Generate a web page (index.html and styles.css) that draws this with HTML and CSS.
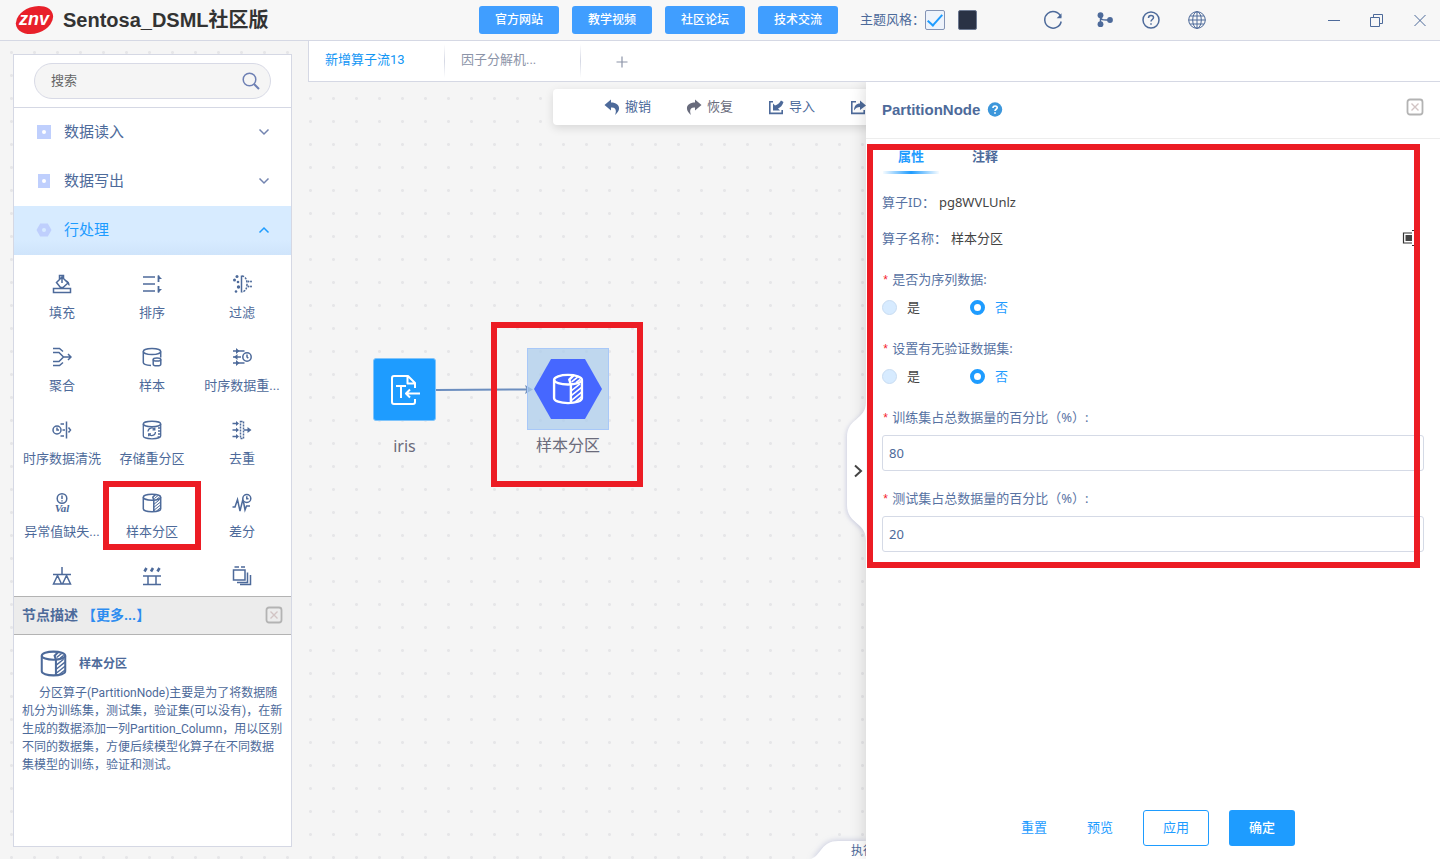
FILE: index.html
```html
<!DOCTYPE html>
<html lang="zh-CN">
<head>
<meta charset="utf-8">
<title>Sentosa_DSML社区版</title>
<link rel="stylesheet" href="styles.css">
</head>
<body>
<svg class="sprite" aria-hidden="true">
  <symbol id="i-partition" viewBox="0 0 20 20">
    <ellipse cx="10" cy="4.2" rx="8.7" ry="3"/>
    <path d="M1.3 4.2v11.6c0 1.7 3.9 3 8.7 3s8.7-1.300 8.700-3V4.200M11.800 7.200v11.500M11.800 7.200L10.800 4.200L13.500 1.500"/>
    <path d="M12 11.200l5.500-4.400M12 14.200l6.500-5.200M12 17.200l6.500-5.200M14.500 18l4-3.200M12.300 5.600l3.700-3M15 6l2.600-2" stroke-width="1"/>
  </symbol>
  <symbol id="i-close" viewBox="0 0 18 18">
    <rect x="1.500" y="1.500" width="15" height="15" rx="2.500" stroke="#b3b3b3" stroke-width="1.800"/>
    <path d="M5.500 5.500l7 7M12.500 5.500l-7 7" stroke="#d2c4c4" stroke-width="1.400"/>
  </symbol>
  <symbol id="i-chevron" viewBox="0 0 12 12"><path d="M1.500 3.500L6 8l4.500-4.500" stroke-width="1.500"/></symbol>
</svg>

<header class="header">
  <div class="brand">
    <svg class="brand-logo" viewBox="0 0 40 30" role="img" aria-label="znv">
      <ellipse cx="19.500" cy="15" rx="19.200" ry="13.200" fill="#e8202a" transform="rotate(-20 19.500 15)"/>
      <text class="brand-mark" x="19" y="20" text-anchor="middle">znv</text>
    </svg>
    <h1 class="brand-name">Sentosa_DSML社区版</h1>
  </div>
  <nav class="links">
    <button class="link-btn">官方网站</button>
    <button class="link-btn">教学视频</button>
    <button class="link-btn">社区论坛</button>
    <button class="link-btn">技术交流</button>
  </nav>
  <div class="theme">
    <label for="theme-light">主题风格：</label>
    <input class="theme-check" id="theme-light" type="checkbox" checked>
    <button class="theme-dark" aria-label="深色主题"></button>
  </div>
  <div class="tools">
    <button class="icon-btn icon-btn-refresh" aria-label="刷新"><svg class="icon" viewBox="0 0 20 20"><path d="M17.800 6.800A8.300 8.300 0 1 0 18.200 11.500"/><path d="M18.500 3.200v5h-4.800z" fill="currentColor" stroke="none"/></svg></button>
    <button class="icon-btn" aria-label="流程"><svg class="icon" viewBox="0 0 20 20"><path d="M5.500 6v9M5.500 6c0 5 4 4 9 4"/><g fill="currentColor" stroke="none"><circle cx="5.500" cy="5.200" r="2.900"/><circle cx="5.500" cy="14.200" r="2.900"/><circle cx="15" cy="10" r="2.900"/></g></svg></button>
    <button class="icon-btn" aria-label="帮助"><svg class="icon" viewBox="0 0 20 20"><circle cx="10" cy="10" r="8"/><path d="M7.500 8c0-3.500 5-3.300 5-.4c0 1.900-2.500 2-2.500 4M10 13.200v1.500" stroke-width="1.500"/></svg></button>
    <button class="icon-btn" aria-label="语言"><svg class="icon icon-thin" viewBox="0 0 20 20"><circle cx="10" cy="10" r="8.300"/><ellipse cx="10" cy="10" rx="4.300" ry="8.300"/><path d="M10 1.700v16.600M1.700 10h16.600M3 6h14M3 14h14"/></svg></button>
  </div>
  <div class="window">
    <button class="icon-btn" aria-label="最小化"><svg class="icon icon-thin" viewBox="0 0 20 20"><path d="M4 10.500h12"/></svg></button>
    <button class="icon-btn" aria-label="还原"><svg class="icon icon-thin" viewBox="0 0 20 20"><path d="M3.500 7.500h9v9h-9zM6.500 7.500v-3h9v9h-3"/></svg></button>
    <button class="icon-btn" aria-label="关闭"><svg class="icon icon-thin" viewBox="0 0 20 20"><path d="M4.500 5l11 11M15.500 5l-11 11"/></svg></button>
  </div>
</header>

<div class="body">
  <aside class="sidebar">
    <div class="search">
      <div class="search-box">
        <input class="search-input" type="text" placeholder="搜索" aria-label="搜索">
        <svg class="search-icon" viewBox="0 0 18 18"><circle cx="7.500" cy="7.500" r="6.300"/><path d="M12 12l5 5" stroke-width="2"/></svg>
      </div>
    </div>
    <button class="category"><svg class="category-icon" viewBox="0 0 16 16"><path fill="#bfcffd" d="M1 1h14v14H1z"/><circle cx="8" cy="8" r="2" fill="#fff"/></svg><span class="category-name">数据读入</span><svg class="chevron"><use href="#i-chevron"/></svg></button>
    <button class="category"><svg class="category-icon" viewBox="0 0 16 16"><path fill="#bfcffd" d="M2 1h12v14H2z"/><circle cx="8" cy="8" r="2" fill="#fff"/></svg><span class="category-name">数据写出</span><svg class="chevron"><use href="#i-chevron"/></svg></button>
    <button class="category category-open"><svg class="category-icon" viewBox="0 0 16 16"><path fill="#bfcffd" d="M4.200 1.500h7.600L15.500 8l-3.700 6.500H4.200L.5 8z"/><circle cx="8" cy="8" r="2" fill="#d7ebff"/></svg><span class="category-name">行处理</span><svg class="chevron chevron-up"><use href="#i-chevron"/></svg></button>

    <div class="operators">
      <button class="operator"><svg class="icon" viewBox="0 0 20 20"><path d="M1.500 14.500h17v4h-17zM4.500 8.500L10 3l6 6l-5 4.500H8.500zM7.500 5.500V1.500h4v3M10 3v6"/><path d="M14 6c2.500 1 4 3 3.500 6c-2-1-2-4-3.500-6z" fill="currentColor" stroke="none"/></svg><span class="operator-name">填充</span></button>
      <button class="operator"><svg class="icon" viewBox="0 0 20 20"><path d="M1 3h12M1 10h12M1 17h12"/><path d="M16.500 1.500v6.500M16.500 12v6.500" stroke-width="1.800"/><path d="M16 1l4 4H16zM16 19l4-4H16z" fill="currentColor" stroke="none"/></svg><span class="operator-name">排序</span></button>
      <button class="operator"><svg class="icon" viewBox="0 0 20 20"><path d="M9.500 1.500v17"/><path d="M10 2c3.500.5 5 3.500 5 8s-1.500 7.500-5 8" stroke-dasharray="2.200 1.200"/><g fill="currentColor" stroke="none"><circle cx="5" cy="2.500" r="1.500"/><circle cx="2.500" cy="6" r="1.500"/><circle cx="6" cy="8" r="1.300"/><circle cx="6.500" cy="13" r="1.700"/><circle cx="4" cy="17.500" r="1.300"/><circle cx="16.500" cy="7.500" r="1"/><circle cx="19" cy="7.500" r="1"/><circle cx="16.500" cy="12.500" r="1"/><circle cx="19" cy="12.500" r="1"/></g></svg><span class="operator-name">过滤</span></button>

      <button class="operator"><svg class="icon" viewBox="0 0 20 20"><path d="M1 5.500h6l4.500 4.500L7 14.500H1M1 1.500h6.500l3.500 3M1 18.500h6.500l3.500-3M11.500 10H19M16 7l3 3l-3 3"/></svg><span class="operator-name">聚合</span></button>
      <button class="operator"><svg class="icon" viewBox="0 0 20 20"><ellipse cx="10" cy="4.500" rx="8.700" ry="3"/><path d="M1.300 4.500v11c0 1.500 3 2.700 7.700 3M18.700 4.500v6"/><ellipse cx="15" cy="12.500" rx="3.800" ry="1.600"/><path d="M11.200 12.500v4.700c0 2.200 7.600 2.200 7.600 0v-4.700"/></svg><span class="operator-name">样本</span></button>
      <button class="operator"><svg class="icon" viewBox="0 0 20 20"><circle cx="15" cy="10" r="4.200"/><path d="M15 7.500V10l1.300 1.300M1 4h11.500M1 10h8M1 16h11.500"/><path d="M4 1l3.500 3L4 7zM5.500 7L2 10l3.500 3zM4 13l3.500 3L4 19z" fill="currentColor" stroke="none"/></svg><span class="operator-name">时序数据重...</span></button>

      <button class="operator"><svg class="icon" viewBox="0 0 20 20"><circle cx="5" cy="10" r="4"/><path d="M5 7.500V10h2M14.500 1.500v17M8.500 4H12M10.500 10H13M8.500 16H12M16.500 7.500L18.500 10l-2 2.500"/></svg><span class="operator-name">时序数据清洗</span></button>
      <button class="operator"><svg class="icon" viewBox="0 0 20 20"><ellipse cx="10" cy="4" rx="8.700" ry="2.700"/><path d="M1.300 4v12c0 1.500 3.900 2.800 8.700 2.800s8.700-1.300 8.700-2.800V4M6 11.500c.3-4 5-4.500 6.500-2M13.500 12c-.3 4-5 4.500-6.500 2M12.800 7.500v2.300h-2.300M6.700 16.200v-2.400H9M16 8h2.500M16 11h2.500M16 14h2.500M15.500 17h2" stroke-width="1.300"/></svg><span class="operator-name">存储重分区</span></button>
      <button class="operator"><svg class="icon" viewBox="0 0 20 20"><path d="M8.500 1.500h3v17h-3z" stroke-dasharray="2 1"/><path d="M.5 3.500H5M.5 10H5M.5 16.500H5M12 10h5"/><path d="M4 1l3 2.500L4 6zM4 7.500L7 10l-3 2.500zM4 14l3 2.500L4 19zM15.500 7l4 3l-4 3z" fill="currentColor" stroke="none"/></svg><span class="operator-name">去重</span></button>

      <button class="operator"><svg class="icon icon-open" viewBox="0 0 20 20"><circle cx="10" cy="5.500" r="4.800"/><path d="M10 2.500V6M10 7.300v1.200"/><text class="icon-text" x="10" y="19" text-anchor="middle">Val</text></svg><span class="operator-name">异常值缺失...</span></button>
      <button class="operator operator-marked"><svg class="icon"><use href="#i-partition"/></svg><span class="operator-name">样本分区</span></button>
      <button class="operator"><svg class="icon" viewBox="0 0 20 20"><path d="M.5 14H3l2.500-7.500L8 18l3-12l2 11l1.500-4H18"/><circle cx="14.800" cy="5.500" r="4" fill="#fff"/><path d="M14.800 3.200v2.500h1.700"/></svg><span class="operator-name">差分</span></button>

      <button class="operator" aria-label="平衡"><svg class="icon" viewBox="0 0 20 20"><path d="M10 1v8M1 8.500h18M5.500 9.500L1.500 18h8zM14.500 9.500L10.500 18h8z"/></svg></button>
      <button class="operator" aria-label="分箱"><svg class="icon" viewBox="0 0 20 20"><path d="M1 10h18M1 18.500h18M6 10v8.500M14 10v8.500"/><path d="M2.500 5.500l2-3.500M9 5.500l2-3.500M15.500 5.500l2-3.500" stroke-width="2.600"/></svg></button>
      <button class="operator" aria-label="窗口"><svg class="icon" viewBox="0 0 20 20"><path d="M1.500 4h11.500v10H1.500zM15.500 6.500v10H5M18.500 9v9.500H8M2.500 1H7M9 1h4"/></svg></button>
    </div>

    <section class="describe">
      <div class="describe-head">
        <h2 class="describe-title">节点描述</h2>
        <a class="describe-more" href="#more">【更多...】</a>
        <button class="close-btn" aria-label="关闭描述"><svg class="close-icon"><use href="#i-close"/></svg></button>
      </div>
      <div class="describe-body">
        <div class="describe-node"><svg class="describe-icon"><use href="#i-partition"/></svg><h3 class="describe-name">样本分区</h3></div>
        <p class="describe-text">分区算子(PartitionNode)主要是为了将数据随机分为训练集，测试集，验证集(可以没有)，在新生成的数据添加一列Partition_Column，用以区别不同的数据集，方便后续模型化算子在不同数据集模型的训练，验证和测试。</p>
      </div>
    </section>
  </aside>

  <main class="main">
    <nav class="tabs">
      <button class="tab tab-active">新增算子流13</button>
      <button class="tab">因子分解机...</button>
      <button class="tab-add" aria-label="新建"><svg class="tab-plus" viewBox="0 0 12 12"><path d="M6 .5v11M.5 6h11"/></svg></button>
    </nav>
    <div class="workspace">
      <div class="canvas">
        <div class="toolbar">
          <button class="tool"><svg class="tool-icon" viewBox="0 0 16 16"><path d="M7 .5L.5 6L7 11.500V8.500c4.500-.5 6 2.500 4 7.500C18 10.500 15.500 3.500 7 3.500z"/></svg>撤销</button>
          <button class="tool tool-grey"><svg class="tool-icon" viewBox="0 0 16 16"><path d="M9 .5L15.500 6L9 11.500V8.500c-4.500-.5-6 2.500-4 7.500C-2 10.500.5 3.500 9 3.500z"/></svg>恢复</button>
          <button class="tool"><svg class="tool-icon" viewBox="0 0 16 16"><path d="M1 2h4v1.600H2.600v10h10.800V11H15v4.200H1zM5 11.500V4.500l2 2c2.500-.5 4.500-2.500 6-5l2.500 1.500c-1 3.500-3 5.500-5.500 6.500l2 2z"/></svg>导入</button>
          <button class="tool" aria-label="导出"><svg class="tool-icon" viewBox="0 0 16 16"><path d="M1 2h5v1.600H2.600v10h10.800V11H15v4.200H1zM4 11.500C4 7 6.500 4.500 10 4.500V1.500L16 6.500L10 11V8c-2.500 0-4.500 1-6 3.500z"/></svg></button>
        </div>
        <svg class="edge" viewBox="0 0 100 12"><path d="M0 7L91 6.500" stroke="#6c8ebf" stroke-width="2"/><path d="M89 2l8 4.500l-8 4.500l1.500-4.500z" fill="#7492bd"/></svg>
        <div class="node node-source">
          <div class="node-box"><svg class="node-icon" viewBox="0 0 32 32"><path d="M26 14V9l-7-7H5a2 2 0 0 0-2 2v24a2 2 0 0 0 2 2h19a2 2 0 0 0 2-2v-3M18.500 2v7.500H26M7 12h10M12 12v12M31 19.500H17M21 15.500l-4 4l4 4"/></svg></div>
          <span class="node-name">iris</span>
        </div>
        <div class="node node-partition">
          <div class="node-select"><div class="node-hex"><svg class="node-icon node-icon-bold"><use href="#i-partition"/></svg></div></div>
          <span class="node-name">样本分区</span>
        </div>
        <div class="node-mark"></div>
        <div class="run-tab">
          <svg class="run-shape" viewBox="0 0 60 24"><path d="M2 25C16 22 14 6 32 6H60V25H2z" fill="#fff"/></svg>
          <span class="run-name">执行</span>
        </div>
      </div>

      <section class="panel">
        <button class="handle" aria-label="收起面板"><svg class="handle-shape" viewBox="0 0 20 138"><path class="handle-fill" d="M20 0C20 18 1 16 1 35v68C1 122 20 120 20 138z"/><path class="handle-arrow" d="M9 63.500l6 5.500L9 74.500"/></svg></button>
        <div class="panel-head">
          <h2 class="panel-title">PartitionNode</h2>
          <svg class="panel-help" viewBox="0 0 16 16" role="img" aria-label="帮助"><circle cx="8" cy="7.500" r="7.200" fill="#3d97db"/><path d="M6 6c0-2.800 4.200-2.500 4.200-.2c0 1.500-2.200 1.500-2.200 3.200M8 10.300v1.500" fill="none" stroke="#fff" stroke-width="1.700"/></svg>
          <button class="close-btn" aria-label="关闭面板"><svg class="close-icon"><use href="#i-close"/></svg></button>
        </div>
        <nav class="panel-tabs">
          <button class="panel-tab panel-tab-active">属性</button>
          <button class="panel-tab">注释</button>
        </nav>
        <form class="form">
          <div class="info"><span class="info-key">算子ID：</span><span>pg8WVLUnlz</span></div>
          <div class="info"><span class="info-key">算子名称：</span><span>样本分区</span><svg class="info-edit" viewBox="0 0 16 16"><path d="M10 3H1.500v10H10" fill="none" stroke="#333" stroke-width="1.200"/><path d="M3.500 5H10v6H3.500z" fill="#444"/><path d="M10 .5h5M10 15.500h5" stroke="#333"/></svg></div>
          <fieldset class="field">
            <legend class="label">是否为序列数据:</legend>
            <div class="radios">
              <label class="radio"><input type="radio" name="serial">是</label>
              <label class="radio"><input type="radio" name="serial" checked>否</label>
            </div>
          </fieldset>
          <fieldset class="field">
            <legend class="label">设置有无验证数据集:</legend>
            <div class="radios">
              <label class="radio"><input type="radio" name="verify">是</label>
              <label class="radio"><input type="radio" name="verify" checked>否</label>
            </div>
          </fieldset>
          <div class="field-text">
            <label class="label" for="train">训练集占总数据量的百分比（%）:</label>
            <input class="input" id="train" type="text" value="80">
          </div>
          <div class="field-text">
            <label class="label" for="test">测试集占总数据量的百分比（%）:</label>
            <input class="input" id="test" type="text" value="20">
          </div>
        </form>
        <footer class="actions">
          <button class="text-btn">重置</button>
          <button class="text-btn">预览</button>
          <button class="apply-btn">应用</button>
          <button class="ok-btn">确定</button>
        </footer>
        <div class="panel-mark"></div>
      </section>
    </div>
  </main>
</div>
</body>
</html>
```
FILE: styles.css
```css
* { box-sizing: border-box; }
body {
  margin: 0;
  height: 100vh;
  display: flex;
  flex-direction: column;
  overflow: hidden;
  background: #f5f5f5;
  color: #4d6a9a;
  font: 13px/20px "Roboto", "Noto Sans CJK SC", sans-serif;
}
h1, h2, h3, p { margin: 0; }
button {
  padding: 0;
  border: 0;
  background: none;
  color: inherit;
  font: inherit;
  cursor: pointer;
}
.sprite { position: absolute; width: 0; height: 0; }
svg { flex: none; }
.icon, .chevron, .search-icon, .describe-icon, .close-icon, .node-icon, .tab-plus {
  fill: none;
  stroke: currentColor;
  stroke-width: 1.5;
}
.icon { display: block; width: 20px; height: 20px; }
.icon-thin { stroke-width: 1; }
.icon-open { overflow: visible; }
.icon-text { font: italic bold 11px "Liberation Serif", serif; fill: currentColor; stroke: none; }

/* Header */
.header {
  flex: none;
  display: flex;
  align-items: center;
  height: 41px;
  padding: 0 10px 0 15px;
  background: #f7f7f7;
  border-bottom: 1px solid #d5d8e4;
}
.brand { display: flex; align-items: center; gap: 8px; flex: 0 0 464px; }
.brand-logo { width: 40px; height: 30px; }
.brand-mark { font: italic bold 18px "Liberation Sans", sans-serif; fill: #fff; }
.brand-name { color: #333; font: bold 20px/30px "Liberation Sans", "Noto Sans CJK SC", sans-serif; }
.links { display: flex; gap: 13px; }
.link-btn {
  width: 80px;
  height: 28px;
  border-radius: 3px;
  background: #409eff;
  color: #fff;
  font-size: 12px;
  font-weight: 500;
}
.theme { display: flex; align-items: center; margin-left: 22px; }
.theme-check {
  appearance: none;
  width: 20px;
  height: 20px;
  margin: 0 13px 0 0;
  border: 1px solid #8494b5;
  border-radius: 2px;
  background: #eef3fb;
}
.theme-check:checked::before {
  content: "";
  display: block;
  width: 6px;
  height: 13px;
  margin: 0 auto;
  border: solid #1e9cff;
  border-width: 0 2px 2px 0;
  transform: rotate(42deg);
}
.theme-dark { width: 19px; height: 20px; border: 1px solid #6c7890; border-radius: 2px; background: #2a3245; }
.tools { display: flex; gap: 26px; margin-left: 66px; }
.icon-btn-refresh { margin-right: 6px; }
.window { display: flex; gap: 23px; margin-left: auto; }

/* Body */
.body {
  flex: 1;
  display: flex;
  min-height: 0;
  background: radial-gradient(circle, #e6e6e8 1px, transparent 2px) 0 0 / 23px 23px;
}
.sidebar {
  flex: 0 0 279px;
  display: flex;
  flex-direction: column;
  margin: 13px 16px 12px 13px;
  border: 1px solid #d5d8e4;
  background: #fff;
}
.search { padding: 8px 20px; border-bottom: 1px solid #d5d8e4; }
.search-box {
  display: flex;
  align-items: center;
  height: 36px;
  padding: 0 10px 0 16px;
  border: 1px solid #d8dae6;
  border-radius: 18px;
  background: #f5f5f5;
}
.search-input { flex: 1; min-width: 0; padding: 0; border: 0; outline: 0; background: none; color: #666; font: inherit; }
.search-input::placeholder { color: #666; }
.search-icon { width: 18px; height: 18px; color: #6e80b4; }
.category {
  flex: none;
  display: flex;
  align-items: center;
  height: 49px;
  padding: 0 21px 2px 22px;
  font-size: 15px;
  text-align: left;
}
.category-open { background: linear-gradient(#d7ebff 70%, #cfe4fb); color: #1e9cff; }
.category-icon { width: 16px; height: 16px; }
.category-name { flex: 1; margin-left: 12px; }
.chevron { width: 12px; height: 12px; color: #7384b0; }
.chevron-up { transform: rotate(180deg); color: #1e9cff; }
.operators {
  flex: 1;
  min-height: 0;
  display: grid;
  grid-template-columns: repeat(3, 1fr);
  grid-auto-rows: 73px;
  overflow: hidden;
  padding: 19px 4px 0 3px;
}
.operator { position: relative; display: flex; flex-direction: column; align-items: center; gap: 9px; white-space: nowrap; }
.operator-marked::after {
  content: "";
  position: absolute;
  inset: -12px -4px 16px -4px;
  border: 6px solid #ec1c24;
}
.describe { flex: none; height: 250px; }
.describe-head {
  display: flex;
  align-items: center;
  height: 39px;
  padding: 0 8px 2px 8px;
  border: solid #b3b3b3;
  border-width: 1px 0;
  background: #ececec;
  font-size: 14px;
  font-weight: bold;
}
.describe-title { font-size: 14px; font-weight: bold; }
.describe-more { margin-left: 4px; color: #2d8cf0; text-decoration: none; }
.close-btn { margin-left: auto; }
.close-icon { display: block; width: 18px; height: 18px; }
.describe-body { padding: 15px 8px; }
.describe-node { display: flex; align-items: center; gap: 12px; padding-left: 18px; }
.describe-icon { width: 27px; height: 27px; }
.describe-name { font-size: 12px; font-weight: bold; }
.describe-text { margin-top: 7px; font-size: 12px; line-height: 18px; text-indent: 17px; }

/* Tabs */
.main { flex: 1; display: flex; flex-direction: column; min-width: 0; }
.tabs { flex: none; display: flex; height: 41px; border: solid #d5d8e4; border-width: 0 0 1px 1px; background: #fff; }
.tab {
  width: 136px;
  padding: 0 0 2px 16px;
  border-right: 1px solid;
  border-image: linear-gradient(#fff 10%, #d5d8e4 50%, #fff 90%) 1;
  color: #8c94a8;
  text-align: left;
}
.tab-active { color: #1296f5; }
.tab-add { width: 82px; }
.tab-plus { width: 12px; height: 12px; color: #8c94a8; stroke-width: 1.2; vertical-align: middle; }

/* Canvas */
.workspace { flex: 1; display: flex; min-height: 0; }
.canvas { flex: 1; position: relative; min-width: 0; overflow: hidden; }
.toolbar {
  position: absolute;
  top: 7px;
  left: 245px;
  right: -10px;
  display: flex;
  align-items: center;
  gap: 35px;
  height: 36px;
  padding: 0 0 1px 51px;
  border-radius: 4px;
  background: #fff;
  box-shadow: 0 3px 10px rgba(0, 0, 0, .12);
}
.tool { flex: none; display: flex; align-items: center; gap: 5px; }
.tool-grey { color: #686b7c; }
.tool-icon { width: 16px; height: 16px; fill: currentColor; }
.node { position: absolute; display: flex; flex-direction: column; align-items: center; color: #6b6b7b; font-size: 16px; font-family: "Noto Sans", "Noto Sans CJK SC", sans-serif; }
.node-source { left: 65px; top: 276px; gap: 15px; }
.node-box { display: grid; place-items: center; width: 63px; height: 63px; border: 1px solid #7fc4fb; border-radius: 3px; background: #1e9cff; }
.node-icon { width: 32px; height: 32px; color: #fff; stroke-width: 2; stroke-linejoin: round; }
.node-icon-bold { stroke-width: 1.5; }
.node-partition { left: 219px; top: 266px; gap: 5px; }
.node-select { display: grid; place-items: center; width: 82px; height: 82px; border: 1px solid #a8c8f8; background: rgba(170, 204, 236, .72); }
.node-hex { display: grid; place-items: center; width: 68px; height: 60px; background: #4667ff; clip-path: polygon(25% 0, 75% 0, 100% 50%, 75% 100%, 25% 100%, 0 50%); }
.node-mark { position: absolute; left: 183px; top: 240px; width: 152px; height: 165px; border: 6px solid #ec1c24; }
.edge { position: absolute; left: 128px; top: 301px; width: 100px; height: 12px; fill: none; }
.run-tab { position: absolute; right: 0; bottom: 0; width: 60px; height: 22px; }
.run-shape { position: absolute; right: 0; bottom: 0; width: 60px; height: 24px; filter: drop-shadow(0 0 3px rgba(90, 100, 170, .35)); }
.run-name { position: absolute; left: 45px; top: 5px; font-size: 12px; line-height: 18px; white-space: nowrap; }

/* Panel */
.panel {
  flex: 0 0 574px;
  position: relative;
  display: flex;
  flex-direction: column;
  background: #fff;
  box-shadow: 0 0 16px rgba(0, 0, 0, .16);
  clip-path: inset(0 0 0 -40px);
}
.handle { position: absolute; left: -20px; top: 320px; width: 20px; height: 138px; }
.handle-shape { display: block; width: 20px; height: 138px; overflow: visible; }
.handle-fill { fill: #fff; filter: drop-shadow(-1px 1px 2px rgba(90, 100, 170, .25)); }
.handle-arrow { fill: none; stroke: #444; stroke-width: 2; }
.panel-head { display: flex; align-items: center; height: 57px; padding: 0 16px; border-bottom: 1px solid #ededed; }
.panel-title { font: bold 15px/20px "Liberation Sans", sans-serif; }
.panel-help { width: 16px; height: 16px; margin-left: 7px; }
.panel-head .close-btn { margin-bottom: 7px; }
.panel-tabs { display: flex; gap: 18px; padding: 8px 17px 0; }
.panel-tab { width: 56px; height: 27px; padding-bottom: 7px; font-weight: bold; border-bottom: 3px solid transparent; }
.panel-tab-active { color: #1e9cff; border-image: linear-gradient(90deg, #fff, #1e9cff 50%, #fff) 1; }
.form { flex: 1; padding: 18px 16px 0; font-family: "Noto Sans", "Noto Sans CJK SC", sans-serif; }
.info { display: flex; align-items: center; margin-bottom: 16px; color: #444; }
.info-key { color: #5873a3; margin-right: 4px; }
.info-edit { width: 16px; height: 16px; margin-left: auto; margin-right: 6px; }
.field { min-width: 0; margin: 21px 0 0; padding: 0; border: 0; }
.field + .field { margin-top: 21px; }
.label { display: block; height: 20px; padding: 0; color: #5873a3; }
.label::before { content: "*"; margin-right: 3px; color: #f5222d; font: 12px/12px "Liberation Mono", monospace; }
.radios { display: flex; padding-top: 8px; }
.radio { display: flex; align-items: center; gap: 10px; width: 88px; color: #444; }
.radio input { appearance: none; width: 15px; height: 15px; margin: 0; border: 1px solid #c8dcf2; border-radius: 50%; background: #d7ebff; }
.radio input:checked { border: 4px solid #1e9cff; background: #fff; }
.radio:has(input:checked) { color: #1e9cff; }
.field-text { display: flex; flex-direction: column; gap: 8px; margin-top: 17px; }
.field + .field-text { margin-top: 21px; }
.input { width: 100%; height: 36px; padding: 0 6px; border: 1px solid #d5dae6; border-radius: 3px; outline: 0; background: #fff; color: #4d6a9a; font: inherit; }
.actions { display: flex; justify-content: center; padding: 0 10px 13px 0; }
.text-btn { width: 66px; height: 36px; color: #1e9cff; }
.apply-btn, .ok-btn { width: 66px; height: 36px; border-radius: 3px; }
.apply-btn { margin: 0 20px 0 10px; border: 1px solid #1e9cff; color: #1e9cff; }
.ok-btn { background: #1e9cff; color: #fff; font-weight: 500; }
.panel-mark { position: absolute; left: 1px; right: 20px; top: 62px; height: 424px; border: 6px solid #ec1c24; pointer-events: none; }
```
